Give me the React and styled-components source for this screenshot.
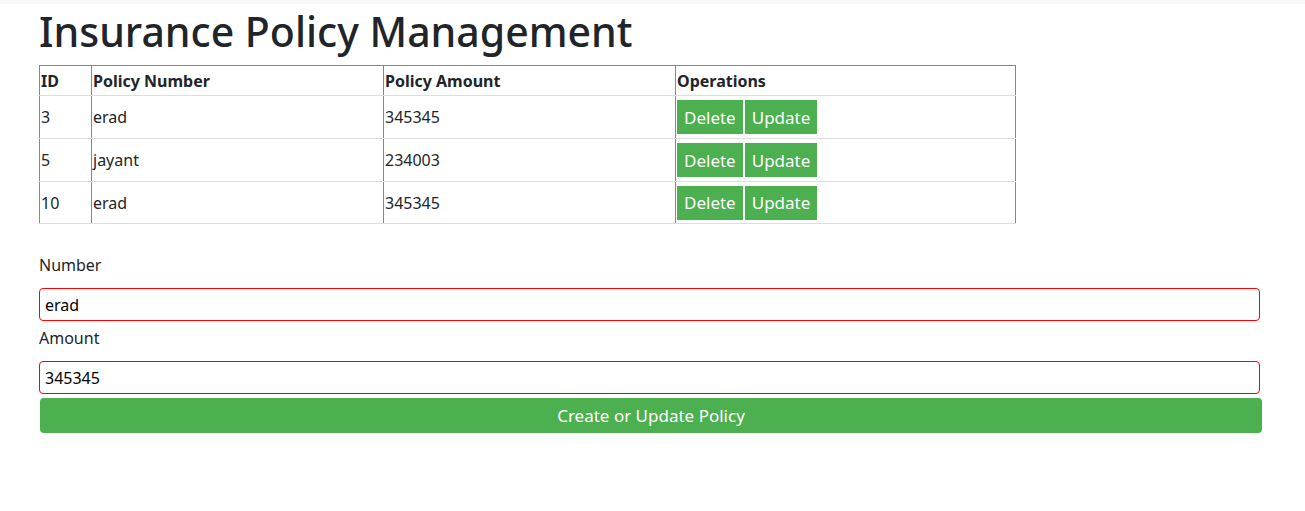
import React from 'react';
import styled, { createGlobalStyle } from 'styled-components';

const GlobalStyle = createGlobalStyle`
  body {
    margin: 0;
    background: #fff;
    font-family: "Noto Sans", "Open Sans", sans-serif;
    color: #212529;
  }
`

const TopStrip = styled.div`
  height: 4px;
  background: #f6f7f8;
`

const Page = styled.div`
  padding: 0 45px 0 39px;
`

const Title = styled.h1`
  margin: 1px 0 8px;
  font-size: 41px;
  font-weight: 500;
  line-height: 52px;
  letter-spacing: 0;
`

const Table = styled.table`
  width: 80%;
  border-collapse: collapse;
  font-size: 16px;
  border-top: 1px solid #888;
  border-bottom: 1px solid #ddd;
`

const HeadCell = styled.th`
  text-align: left;
  font-weight: 700;
  padding: 0 1px;
  height: 29px;
  width: ${p => p.$w ? `${p.$w}px` : 'auto'};
  border-left: 1px solid #888;
  border-right: 1px solid #888;
  border-bottom: 1px solid #ddd;
`

const Cell = styled.td`
  padding: 0 1px;
  height: ${p => p.$last ? '41px' : '42px'};
  border-left: 1px solid #888;
  border-right: 1px solid #888;
  border-bottom: 1px solid #ddd;
`

const ActionButton = styled.button`
  background: #4caf50;
  color: #fff;
  border: none;
  font-family: inherit;
  font-size: 17px;
  height: 34px;
  padding: 0 7px;
  margin-right: 2px;
  cursor: pointer;
`

const Form = styled.form`
  margin-top: 29px;
`

const Label = styled.label`
  display: block;
  font-size: 16px;
  line-height: 24px;
  margin: ${p => p.$first ? '0' : '5px'} 0 11px;
`

const Input = styled.input`
  display: block;
  box-sizing: border-box;
  width: 100%;
  height: 33px;
  border: 1px solid #f00;
  border-radius: 4px;
  padding: 0 5px;
  font-family: inherit;
  font-size: 16px;
  color: #000;
  outline: none;
`

const SubmitButton = styled.button`
  display: block;
  width: calc(100% + 1px);
  margin: 4px 0 0 1px;
  height: 35px;
  background: #4caf50;
  color: #fff;
  border: none;
  border-radius: 4px;
  font-family: inherit;
  font-size: 17px;
  cursor: pointer;
`

const policies = [
  { id: 3, number: 'erad', amount: '345345' },
  { id: 5, number: 'jayant', amount: '234003' },
  { id: 10, number: 'erad', amount: '345345' },
]

const App = () => {
  return (
    <>
      <GlobalStyle />
      <TopStrip />
      <Page>
        <Title>Insurance Policy Management</Title>
        <Table>
          <thead>
            <tr>
              <HeadCell $w={49}>ID</HeadCell>
              <HeadCell $w={289}>Policy Number</HeadCell>
              <HeadCell $w={289}>Policy Amount</HeadCell>
              <HeadCell>Operations</HeadCell>
            </tr>
          </thead>
          <tbody>
            {policies.map((p, i) => {
              const last = i === policies.length - 1
              return (
                <tr key={p.id}>
                  <Cell $last={last}>{p.id}</Cell>
                  <Cell $last={last}>{p.number}</Cell>
                  <Cell $last={last}>{p.amount}</Cell>
                  <Cell $last={last}>
                    <ActionButton type="button">Delete</ActionButton>
                    <ActionButton type="button">Update</ActionButton>
                  </Cell>
                </tr>
              )
            })}
          </tbody>
        </Table>
        <Form onSubmit={e => e.preventDefault()}>
          <Label $first>Number</Label>
          <Input defaultValue="erad" />
          <Label>Amount</Label>
          <Input defaultValue="345345" />
          <SubmitButton type="submit">Create or Update Policy</SubmitButton>
        </Form>
      </Page>
    </>
  )
}

export default App;
